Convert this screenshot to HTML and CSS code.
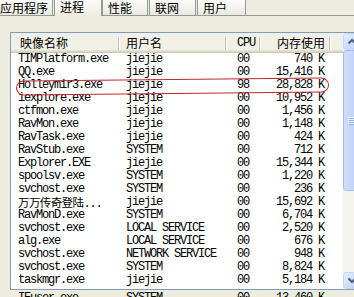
FILE: index.html
```html
<!DOCTYPE html>
<html>
<head>
<meta charset="utf-8">
<link rel="stylesheet" href="styles.css">
</head>
<body>
<div class="tabs">
  <div class="tab t1">应用程序</div>
  <div class="tab sel">进程</div>
  <div class="tab t3">性能</div>
  <div class="tab t4">联网</div>
  <div class="tab t5">用户</div>
</div>
<div class="page">
  <div class="list">
    <div class="grid">
      <div class="hdr">
        <span class="h h1">映像名称</span><i class="sep"></i>
        <span class="h h2">用户名</span><i class="sep"></i>
        <span class="h h3">CPU</span><i class="sep"></i>
        <span class="h h4">内存使用</span><i class="sep"></i>
        <span class="h h5"></span>
      </div>
      <div class="row first"><span class="c1">TIMPlatform.exe</span><span class="c2">jiejie</span><span class="c3">00</span><span class="c4">740 K</span></div>
      <div class="row"><span class="c1">QQ.exe</span><span class="c2">jiejie</span><span class="c3">00</span><span class="c4">15,416 K</span></div>
      <div class="row"><span class="c1">Holleymir3.exe</span><span class="c2">jiejie</span><span class="c3">98</span><span class="c4">28,828 K</span></div>
      <div class="row"><span class="c1">iexplore.exe</span><span class="c2">jiejie</span><span class="c3">00</span><span class="c4">10,952 K</span></div>
      <div class="row"><span class="c1">ctfmon.exe</span><span class="c2">jiejie</span><span class="c3">00</span><span class="c4">1,456 K</span></div>
      <div class="row"><span class="c1">RavMon.exe</span><span class="c2">jiejie</span><span class="c3">00</span><span class="c4">1,148 K</span></div>
      <div class="row"><span class="c1">RavTask.exe</span><span class="c2">jiejie</span><span class="c3">00</span><span class="c4">424 K</span></div>
      <div class="row"><span class="c1">RavStub.exe</span><span class="c2">SYSTEM</span><span class="c3">00</span><span class="c4">712 K</span></div>
      <div class="row"><span class="c1">Explorer.EXE</span><span class="c2">jiejie</span><span class="c3">00</span><span class="c4">15,344 K</span></div>
      <div class="row"><span class="c1">spoolsv.exe</span><span class="c2">SYSTEM</span><span class="c3">00</span><span class="c4">1,220 K</span></div>
      <div class="row"><span class="c1">svchost.exe</span><span class="c2">SYSTEM</span><span class="c3">00</span><span class="c4">236 K</span></div>
      <div class="row"><span class="c1"><span class="cjk">万万传奇登陆</span>...</span><span class="c2">jiejie</span><span class="c3">00</span><span class="c4">15,692 K</span></div>
      <div class="row"><span class="c1">RavMonD.exe</span><span class="c2">SYSTEM</span><span class="c3">00</span><span class="c4">6,704 K</span></div>
      <div class="row"><span class="c1">svchost.exe</span><span class="c2">LOCAL SERVICE</span><span class="c3">00</span><span class="c4">2,520 K</span></div>
      <div class="row"><span class="c1">alg.exe</span><span class="c2">LOCAL SERVICE</span><span class="c3">00</span><span class="c4">676 K</span></div>
      <div class="row"><span class="c1">svchost.exe</span><span class="c2">NETWORK SERVICE</span><span class="c3">00</span><span class="c4">948 K</span></div>
      <div class="row"><span class="c1">svchost.exe</span><span class="c2">SYSTEM</span><span class="c3">00</span><span class="c4">8,824 K</span></div>
      <div class="row"><span class="c1">taskmgr.exe</span><span class="c2">jiejie</span><span class="c3">00</span><span class="c4">5,184 K</span></div>
    </div>
    <div class="vs">
      <div class="btn"><svg width="17" height="15" viewBox="0 0 17 15"><path d="M4.5 9.5 L8 6 L11.5 9.5" fill="none" stroke="#4d6185" stroke-width="2"/></svg></div>
      <div class="thumb"><svg width="15" height="8" viewBox="0 0 15 8"><path d="M4 0.5H11M4 2.5H11M4 4.5H11M4 6.5H11" stroke="#eef4fe" stroke-width="1"/><path d="M5 1.5H12M5 3.5H12M5 5.5H12M5 7.5H12" stroke="#8cb0f0" stroke-width="1"/></svg></div>
      <div class="track"></div>
      <div class="btn"><svg width="17" height="15" viewBox="0 0 17 15"><path d="M4.5 5.5 L8 9 L11.5 5.5" fill="none" stroke="#4d6185" stroke-width="2"/></svg></div>
    </div>
  </div>
  <div class="row ghost"><span class="c1">IEuser.exe</span><span class="c2">SYSTEM</span><span class="c3">00</span><span class="c4">13,460 K</span></div>
</div>
<div class="mark"></div>
</body>
</html>
```

FILE: styles.css
```css
* { box-sizing: border-box; }
html, body { margin: 0; }
body {
  width: 354px;
  height: 297px;
  overflow: hidden;
  position: relative;
  background: #eeecdf;
  font-family: "Noto Sans CJK SC", sans-serif;
  font-size: 12px;
  color: #000;
}
.tabs {
  display: flex;
  align-items: flex-end;
  height: 19px;
  margin-top: -3px;
  margin-left: -6px;
  border-bottom: 1px solid #919b9c;
}
.tab {
  height: 18px;
  border: 1px solid #919b9c;
  border-bottom: 0;
  border-radius: 3px 3px 0 0;
  padding: 3px 0 0 5px;
  line-height: 13px;
  white-space: nowrap;
  background: linear-gradient(#fefefe, #ebe9de);
}
.t1 { width: 59px; }
.sel {
  width: 48px;
  height: 20px;
  margin-left: 1px;
  margin-bottom: -1px;
  padding-top: 3px;
  background: linear-gradient(#fcfcfe, #eeecdf);
}
.t3 { width: 46px; }
.t4 { width: 47px; margin-left: 1px; }
.t5 { width: 49px; margin-left: 1px; }

.page { padding: 16px 0 0 10px; }
.list {
  display: flex;
  width: 352px;
  height: 258px;
  border: 1px solid #7f9db9;
  background: #fff;
}
.grid { width: 332px; flex: none; overflow: hidden; }
.hdr {
  display: flex;
  align-items: center;
  height: 20px;
  background: #f1f0e6;
  box-shadow: inset 0 -1px #cdcab8, inset 0 -2px #dcd9c8, inset 0 -3px #e6e3d3;
}
.h { line-height: 14px; white-space: nowrap; flex: none; }
.h1 { width: 107px; padding-left: 9px; }
.h2 { width: 105px; padding-left: 6px; }
.h3 { width: 32px; padding-left: 10px; font-family: "Liberation Mono", monospace; letter-spacing: -1.2px; }
.h4 { width: 68px; padding-right: 4px; text-align: right; }
.h5 { width: 12px; }
.sep {
  flex: none;
  width: 2px;
  height: 13px;
  border-left: 1px solid #c5c2b0;
  border-right: 1px solid #fff;
}
.row {
  display: flex;
  height: 13px;
  line-height: 13px;
  font-family: "Liberation Mono", "Noto Sans CJK SC", monospace;
  letter-spacing: -1.2px;
  white-space: nowrap;
}
.row > span { flex: none; overflow: hidden; }
.c1 { width: 109px; padding-left: 7px; }
.c2 { width: 107px; padding-left: 6px; }
.c3 { width: 34px; padding-left: 10px; }
.c4 { width: 70px; padding-right: 7px; text-align: right; }
.row .cjk { letter-spacing: -0.6px; font-family: "Noto Sans CJK SC", sans-serif; font-size: 11.5px; }
.ghost { margin: 2px 0 0 1px; }

.vs {
  width: 17px;
  flex: none;
  display: flex;
  flex-direction: column;
  background: #f5f4ef;
}
.btn {
  flex: none;
  height: 17px;
  border: 1px solid #c6d6f8;
  border-radius: 3px;
  background: linear-gradient(135deg, #e6eefe, #bccff8);
}
.btn svg { display: block; }
.thumb {
  flex: none;
  height: 141px;
  border: 1px solid #a9c0ef;
  border-radius: 3px;
  background: linear-gradient(90deg, #d0ddfc, #bcd0f9);
  display: flex;
  align-items: center;
}
.thumb svg { display: block; }
.track { flex: 1; }

.mark {
  position: absolute;
  left: 16px;
  top: 79px;
  width: 313px;
  height: 15px;
  border: 1px solid #c0282c;
  border-radius: 8px;
  transform: rotate(-0.55deg);
}
```
